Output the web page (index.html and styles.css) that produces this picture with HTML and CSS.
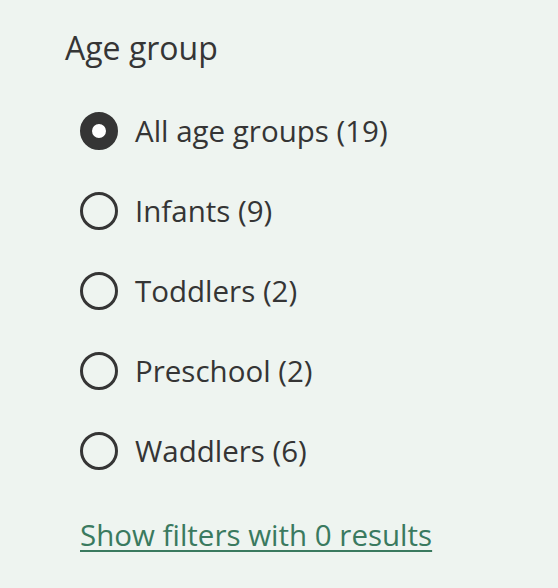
FILE: index.html
```html
<!DOCTYPE html>
<html>
<head>
<meta charset="utf-8">
<link rel="stylesheet" href="styles.css">
</head>
<body>
<section class="filter">
  <h2 class="title">Age group</h2>
  <ul class="options">
    <li class="option"><span class="radio checked"></span><span class="label">All age groups (19)</span></li>
    <li class="option"><span class="radio"></span><span class="label">Infants (9)</span></li>
    <li class="option"><span class="radio"></span><span class="label">Toddlers (2)</span></li>
    <li class="option"><span class="radio"></span><span class="label">Preschool (2)</span></li>
    <li class="option"><span class="radio"></span><span class="label">Waddlers (6)</span></li>
  </ul>
  <a class="more" href="#">Show filters with 0 results</a>
</section>
</body>
</html>
```
FILE: styles.css
```css
html, body {
  margin: 0;
  padding: 0;
  background: #eef4f0;
}
body {
  font-family: "Open Sans", "Lato", sans-serif;
  color: #353535;
}
.filter {
  padding: 28px 0 0 65px;
}
.title {
  margin: 0;
  font-size: 32px;
  font-weight: 500;
  line-height: 40px;
}
.options {
  list-style: none;
  margin: 44px 0 0 15px;
  padding: 0;
  display: flex;
  flex-direction: column;
  gap: 42px;
}
.option {
  display: flex;
  align-items: center;
  gap: 17px;
  height: 38px;
}
.radio {
  box-sizing: border-box;
  width: 38px;
  height: 38px;
  border-radius: 50%;
  border: 3px solid #353535;
  background: transparent;
}
.radio.checked {
  border: 12px solid #353535;
  background: #ffffff;
}
.label {
  font-size: 29.5px;
  line-height: 38px;
}
.more {
  display: inline-block;
  margin: 46px 0 0 15px;
  font-size: 29.5px;
  line-height: 38px;
  color: #3a7a5f;
  text-decoration: underline;
  text-decoration-thickness: 2px;
  text-underline-offset: 4px;
}
```
